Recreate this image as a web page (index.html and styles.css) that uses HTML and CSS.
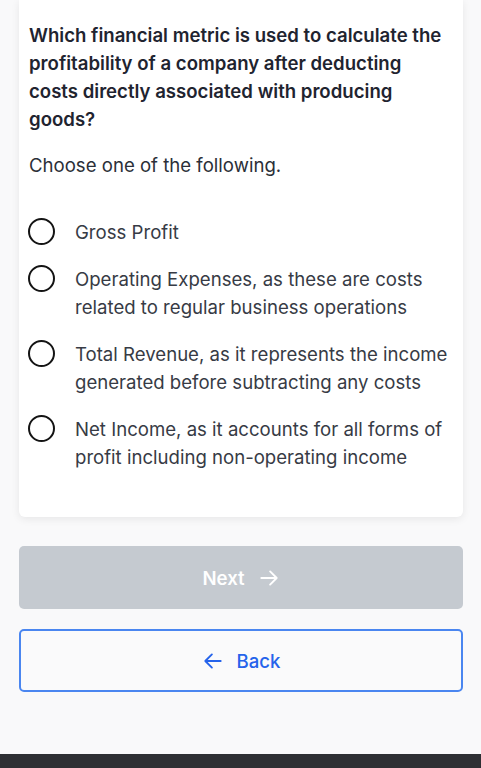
FILE: index.html
```html
<!DOCTYPE html>
<html lang="en">
<head>
<meta charset="utf-8">
<title>Question</title>
<link rel="stylesheet" href="styles.css">
</head>
<body>
<div class="page">
	<div class="card">
		<p class="question">Which financial metric is used to calculate the profitability of a company after deducting costs directly associated with producing goods?</p>
		<p class="hint">Choose one of the following.</p>
		<ul class="options">
			<li><span class="radio"></span><span class="label">Gross Profit</span></li>
			<li><span class="radio"></span><span class="label">Operating Expenses, as these are costs related to regular business operations</span></li>
			<li><span class="radio"></span><span class="label">Total Revenue, as it represents the income generated before subtracting any costs</span></li>
			<li><span class="radio"></span><span class="label">Net Income, as it accounts for all forms of profit including non-operating income</span></li>
		</ul>
	</div>
	<div class="actions">
		<button class="btn next" disabled>Next
			<svg width="22" height="22" viewBox="0 0 20 20" fill="none" stroke="currentColor" stroke-width="1.7" stroke-linecap="round" stroke-linejoin="round"><path d="M3 10h14M11 4l6 6-6 6"/></svg>
		</button>
		<button class="btn back">
			<svg width="22" height="22" viewBox="0 0 20 20" fill="none" stroke="currentColor" stroke-width="1.7" stroke-linecap="round" stroke-linejoin="round"><path d="M17 10H3M9 4l-6 6 6 6"/></svg>
			Back
		</button>
	</div>
	<div class="bar"></div>
</div>
</body>
</html>
```

FILE: styles.css
```css
*{
	padding: 0;
	margin: 0;
	box-sizing: border-box;
}
ul,li{
	list-style: none;
}
body{
	background: #f9f9fa;
	font-family: Inter, "Noto Sans", sans-serif;
	color: #1f2937;
}
.page{
	display: flex;
	flex-direction: column;
	min-height: 768px;
	padding: 0 18px 0 19px;
}
.card{
	background: #fff;
	border-radius: 0 0 6px 6px;
	box-shadow: 0 2px 8px rgba(0,0,0,.08);
	padding: 21px 8px 46px 10px;
}
.question{
	font-size: 18.6px;
	font-weight: 600;
	line-height: 28px;
	color: #1f2430;
}
.hint{
	margin-top: 18px;
	font-size: 18.6px;
	line-height: 28px;
	color: #2b2f38;
}
.options{
	margin-top: 39px;
	display: flex;
	flex-direction: column;
	gap: 19px;
}
.options li{
	display: flex;
	align-items: flex-start;
	gap: 20px;
}
.radio{
	flex: none;
	width: 27px;
	height: 27px;
	margin: 0 0 0 -1px;
	border: 2.5px solid #141414;
	border-radius: 50%;
}
.label{
	font-size: 18.6px;
	line-height: 28px;
	color: #373b45;
}
.actions{
	margin-top: 29px;
	display: flex;
	flex-direction: column;
	gap: 20px;
}
.btn{
	height: 63px;
	border-radius: 5px;
	font-family: Inter, "Noto Sans", sans-serif;
	font-size: 18.6px;
	font-weight: 600;
	display: flex;
	align-items: center;
	justify-content: center;
	gap: 13px;
}
.next{
	background: #c5cad0;
	border: none;
	color: #fff;
}
.back{
	background: #fafafb;
	border: 2px solid #4a86f0;
	color: #2563eb;
	font-weight: 500;
}
.bar{
	margin-top: auto;
	height: 14px;
	margin-left: -19px;
	margin-right: -18px;
	background: #2e2f33;
}
```
